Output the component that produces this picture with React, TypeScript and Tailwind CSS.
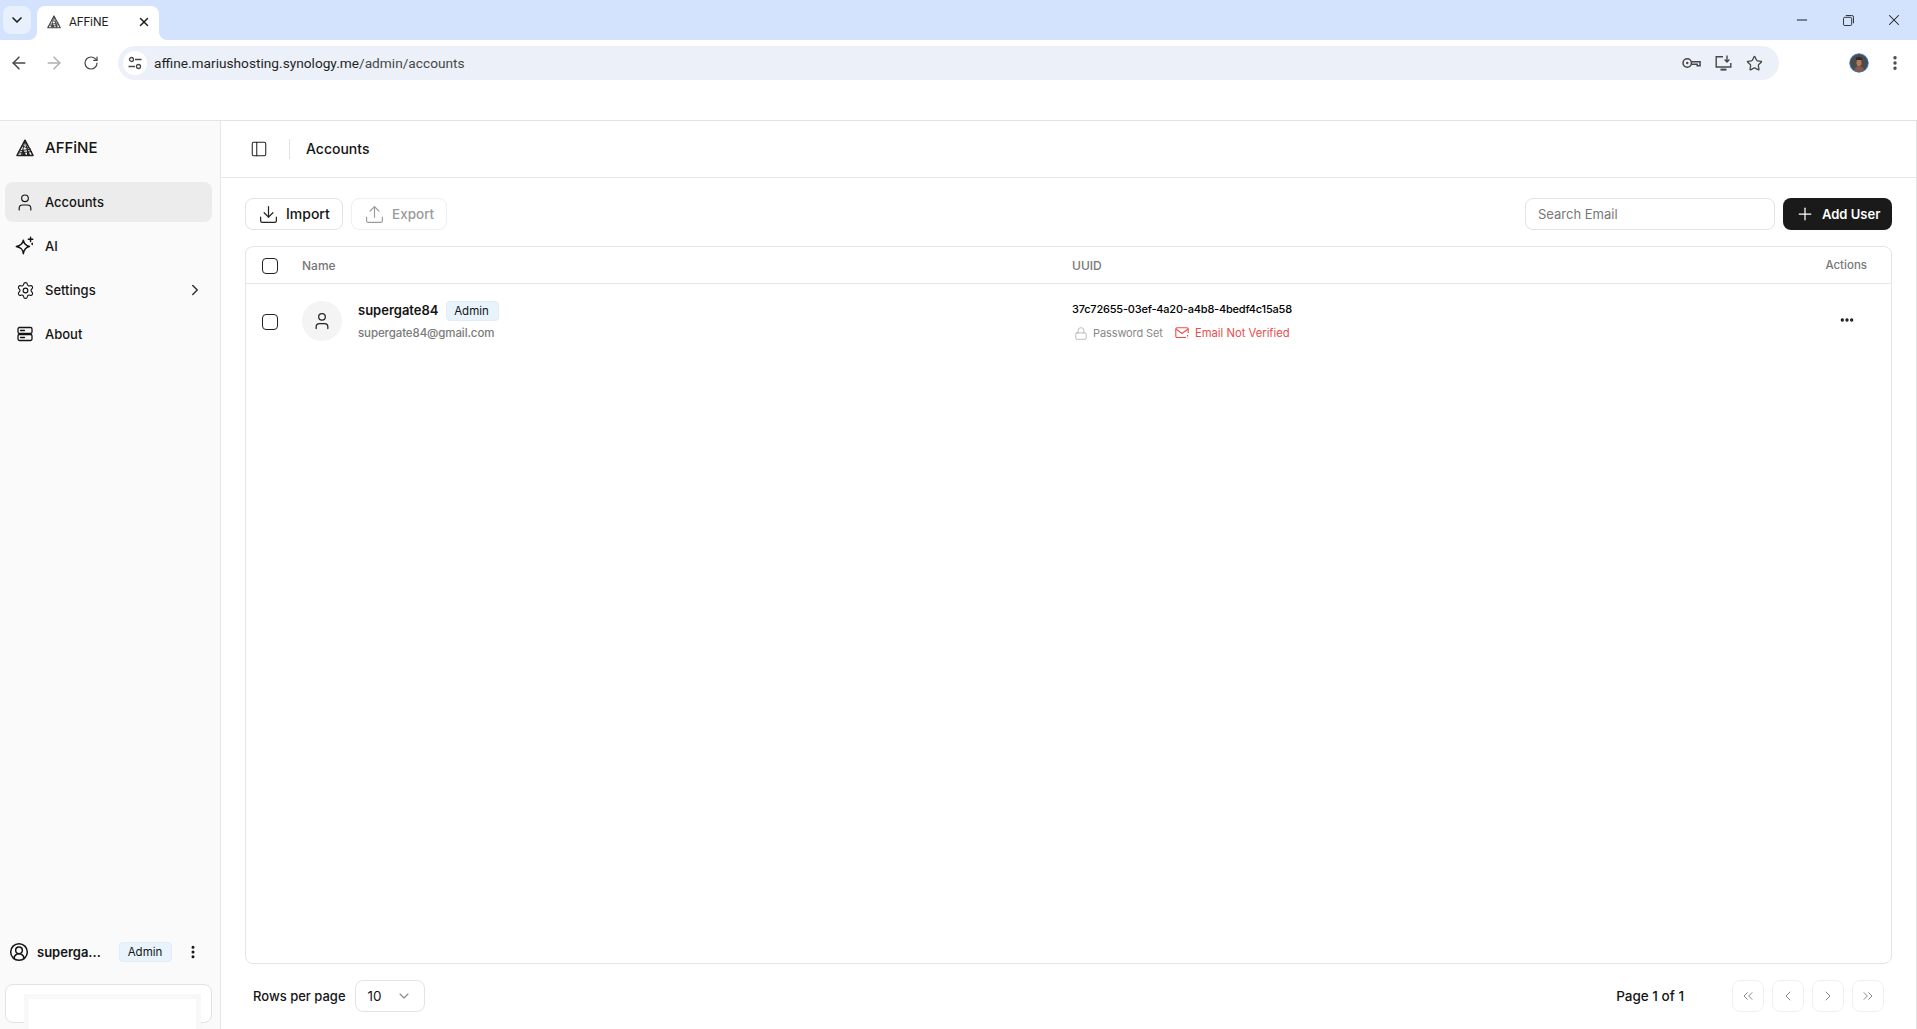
import {
  ArrowLeft, ArrowRight, RotateCw, X, Minus, Star, EllipsisVertical, User, Settings, ChevronRight,
  PanelLeft, Download, Upload, Plus, Ellipsis, ChevronDown, ChevronLeft, ChevronsLeft, ChevronsRight, Lock, CircleUserRound,
} from 'lucide-react';

function AffineLogo({ className }: { className?: string }) {
  return (
    <svg viewBox="0 0 18 18" className={className} fill="none" stroke="currentColor">
      <path d="M9 1.2 L1 16.4 H17 Z" strokeWidth="1.5" strokeLinejoin="round" />
      <path d="M9 1.5 L5.5 16 M9 1.5 L12.5 16 M3.5 12 L15 10 M3 14 L16 12.5 M6 7 L12 9" strokeWidth="1" />
      <path d="M7 10 L10 16 H6 Z M11 8 L14 16 H11 Z" fill="currentColor" stroke="none" />
    </svg>
  );
}

function AiIcon({ className }: { className?: string }) {
  return (
    <svg viewBox="0 0 18 18" className={className} fill="none" stroke="currentColor" strokeWidth="1.3" strokeLinejoin="round" strokeLinecap="round">
      <path d="M7.5 3.8 C8 7 9.4 8.6 13 9.5 C9.4 10.4 8 12 7.5 16 C7 12 5.6 10.4 1.2 9.5 C5.6 8.6 7 7 7.5 3.8 Z" />
      <path d="M14 1 v4 M12 3 h4" />
      <path d="M15.5 6.6 v1" />
    </svg>
  );
}

function AboutIcon({ className }: { className?: string }) {
  return (
    <svg viewBox="0 0 16 16" className={className} fill="none" stroke="currentColor" strokeWidth="1.3" strokeLinecap="round">
      <rect x="1" y="1.5" width="14" height="6" rx="1.4" />
      <rect x="1" y="8.5" width="14" height="6" rx="1.4" />
      <path d="M3.5 4.5 h4 M3.5 11.5 h4" />
    </svg>
  );
}

function TuneIcon() {
  return (
    <svg viewBox="0 0 14 14" className="h-[14px] w-[14px]" fill="none" stroke="#474747" strokeWidth="1.3">
      <circle cx="3.5" cy="3.5" r="2" />
      <path d="M7 3.5 h6.5 M.5 10.5 h6.5" />
      <circle cx="10.5" cy="10.5" r="2" />
    </svg>
  );
}

function KeyIcon() {
  return (
    <svg viewBox="0 0 20 12" className="h-[12px] w-[19px]" fill="none" stroke="#474747" strokeWidth="1.6">
      <circle cx="5.5" cy="6" r="4.4" />
      <circle cx="5.5" cy="6" r="1.3" fill="#474747" stroke="none" />
      <path d="M10 4.6 h9 v4.4 h-3 v-1.8 h-6" />
    </svg>
  );
}

function InstallIcon() {
  return (
    <svg viewBox="0 0 17 16" className="h-[16px] w-[17px]" fill="none" stroke="#474747" strokeWidth="1.4">
      <path d="M8 1.7 H1.2 V12 H15.8 V8" />
      <path d="M5.5 14.6 H11.5" strokeWidth="2" />
      <path d="M12 .5 V7 M9.6 4.6 L12 7 L14.4 4.6" />
    </svg>
  );
}

function ProfileAvatar() {
  return (
    <svg viewBox="0 0 20 20" className="h-5 w-5 rounded-full">
      <circle cx="10" cy="10" r="10" fill="#4a9be8" />
      <circle cx="10" cy="10" r="9" fill="#4b4b4b" />
      <path d="M7 5 C8 3.5 12 3.5 13 5.5 V9 H7 Z" fill="#3a2620" />
      <path d="M7.5 7 H12.5 V11.5 L10.5 13 H8.5 L7.5 11 Z" fill="#b07a62" />
      <path d="M5.5 17 C6 14 8 13 10 13 C12.5 13 14.5 14.5 15 17.5 L10 19 Z" fill="#8a5a48" />
    </svg>
  );
}

function MailAlertIcon() {
  return (
    <svg viewBox="0 0 14 12" className="h-[12px] w-[14px]" fill="none" stroke="#eb4d4d" strokeWidth="1.1" strokeLinejoin="round">
      <path d="M11 10.5 H2 a1.2 1.2 0 0 1 -1.2 -1.2 V2 A1.2 1.2 0 0 1 2 .8 H12 A1.2 1.2 0 0 1 13.2 2 V6" />
      <path d="M1 2 L7 6.5 L13 2" />
      <path d="M12.6 8 v1.6 M12.6 10.8 v.5" />
    </svg>
  );
}

function NavItem({ icon, label, active, chevron }: { icon: React.ReactNode; label: string; active?: boolean; chevron?: boolean }) {
  return (
    <div className={`flex h-10 items-center rounded-lg pl-[10px] pr-2 ${active ? 'bg-[#ececec]' : ''}`}>
      <span className="mr-[10px] flex w-5 shrink-0 items-center justify-center">{icon}</span>
      <span className="pt-px text-[13px] font-medium text-[#141414]">{label}</span>
      {chevron && <ChevronRight className="ml-auto h-[18px] w-[18px] text-[#333]" strokeWidth={2} />}
    </div>
  );
}

function PageButton({ children }: { children: React.ReactNode }) {
  return (
    <div className="flex h-8 w-8 items-center justify-center rounded-lg border border-[#f0f0f0] text-[#8a8a8a]">
      {children}
    </div>
  );
}

function AdminBadge() {
  return (
    <span className="flex h-5 w-[53px] items-center justify-center rounded border border-[#e0edf7] bg-[#e8f3fc] pr-px pt-px text-[11.5px] text-[#141414]">
      Admin
    </span>
  );
}

function Checkbox() {
  return <span className="h-4 w-4 shrink-0 rounded border border-[#222]" />;
}

export default function App() {
  return (
    <div className="flex h-[1029px] w-[1917px] flex-col overflow-hidden bg-white font-['Inter',sans-serif] text-[#141414]">
      {/* browser frame */}
      <div className="flex h-10 shrink-0 items-end bg-[#d3e3fd] pl-[3px]">
        <div className="mb-[6px] flex h-[28px] w-[28px] items-center justify-center rounded-lg bg-[#e9f0fd]">
          <ChevronDown className="h-4 w-4 text-[#1f1f1f]" strokeWidth={2.5} />
        </div>
        <div className="relative ml-[6px] flex h-[34px] w-[122px] items-center rounded-t-lg bg-white pb-[3px] pl-[10px] pr-[8px]">
          <svg viewBox="0 0 8 8" className="absolute -left-2 bottom-0 h-2 w-2"><path d="M8 0 V8 H0 A8 8 0 0 0 8 0 Z" fill="#fff" /></svg>
          <svg viewBox="0 0 8 8" className="absolute -right-2 bottom-0 h-2 w-2"><path d="M0 0 V8 H8 A8 8 0 0 1 0 0 Z" fill="#fff" /></svg>
          <AffineLogo className="h-[14px] w-[14px] text-[#444]" />
          <span className="ml-[8px] font-['Roboto',sans-serif] text-xs text-[#1f1f1f]">AFFiNE</span>
          <X className="ml-auto h-[14px] w-[14px] text-[#1f1f1f]" strokeWidth={2.5} />
        </div>
        <div className="ml-auto flex h-10 items-center text-[#1f1f1f]">
          <span className="flex w-[46px] justify-center"><Minus className="h-4 w-4" strokeWidth={1.5} /></span>
          <span className="flex w-[46px] justify-center">
            <svg viewBox="0 0 12 12" className="h-[11px] w-[11px]" fill="none" stroke="currentColor" strokeWidth="1"><rect x=".5" y="2.5" width="9" height="9" rx="1.5" /><path d="M3 .5 H9.5 A2 2 0 0 1 11.5 2.5 V9" /></svg>
          </span>
          <span className="flex w-[46px] justify-center"><X className="h-[18px] w-[18px]" strokeWidth={1.4} /></span>
        </div>
      </div>
      <div className="flex h-10 shrink-0 items-center rounded-tr-lg bg-white">
        <div className="mt-[6px] flex w-[118px] shrink-0 items-center text-[#474747]">
          <ArrowLeft className="ml-[9px] h-5 w-5" strokeWidth={1.8} />
          <ArrowRight className="ml-[15px] h-5 w-5 text-[#b0b0b0]" strokeWidth={1.8} />
          <RotateCw className="ml-[19px] h-4 w-4" strokeWidth={1.8} />
        </div>
        <div className="mt-[6px] flex h-[34px] w-[1661px] items-center rounded-full bg-[#ecf1f9] pl-[5px] pr-[16px]">
          <span className="flex h-6 w-6 items-center justify-center rounded-full bg-white"><TuneIcon /></span>
          <span className="ml-[7px] font-['Roboto',sans-serif] text-[13.7px] text-[#1f1f1f]">
            affine.mariushosting.synology.me<span className="text-[#474747]">/admin/accounts</span>
          </span>
          <span className="ml-auto flex items-center gap-[14px]">
            <KeyIcon />
            <InstallIcon />
            <Star className="h-[17px] w-[17px] text-[#474747]" strokeWidth={1.8} />
          </span>
        </div>
        <span className="ml-[70px] mt-[6px]"><ProfileAvatar /></span>
        <EllipsisVertical className="ml-[17px] mt-[6px] h-[18px] w-[18px] text-[#474747]" strokeWidth={2.5} />
      </div>
      <div className="h-[41px] shrink-0 border-b border-[#e3e3e3] bg-white" />

      {/* page */}
      <div className="flex min-h-0 flex-1 border-r border-[#e3e3e3]">
        <aside className="flex w-[221px] shrink-0 flex-col border-r border-[#e8e8e8] bg-[#fafafa]">
          <div className="flex h-[61px] shrink-0 items-center pb-[8px] pl-4">
            <AffineLogo className="h-[18px] w-[18px] text-[#222]" />
            <span className="ml-[11px] pt-px text-[15px] font-medium text-[#141414]">AFFiNE</span>
          </div>
          <nav className="flex flex-col gap-1 pl-[5px] pr-2">
            <NavItem active label="Accounts" icon={<User className="h-[21px] w-[21px]" strokeWidth={1.4} />} />
            <NavItem label="AI" icon={<AiIcon className="h-5 w-5" />} />
            <NavItem label="Settings" chevron icon={<Settings className="h-[19px] w-[19px]" strokeWidth={1.4} />} />
            <NavItem label="About" icon={<AboutIcon className="h-4 w-4" />} />
          </nav>
          <div className="mt-auto flex h-5 shrink-0 items-center pl-[9px]">
            <CircleUserRound className="h-[20px] w-[20px] text-[#141414]" strokeWidth={1.8} />
            <span className="ml-[8px] w-[82px] pt-px text-[13px] font-semibold text-[#141414]">superga...</span>
            <AdminBadge />
            <EllipsisVertical className="ml-[13px] h-4 w-4 text-[#141414]" strokeWidth={2.5} />
          </div>
          <div className="ml-[5px] mt-[22px] mb-[6px] h-[39px] w-[207px] shrink-0 rounded-lg border border-[#e3e3e3] bg-white pl-[18px] pt-[9px]">
            <div className="h-[36px] w-[177px] bg-[#f8f8f8] px-[5px] pt-[5px]">
              <div className="h-[31px] w-[167px] bg-white" />
            </div>
          </div>
        </aside>

        <main className="flex min-w-0 flex-1 flex-col">
          <header className="flex h-[57px] shrink-0 items-center border-b border-[#e8e8e8] pl-[29px]">
            <PanelLeft className="h-[18px] w-[18px] text-[#222]" strokeWidth={1.4} />
            <span className="ml-[21px] h-5 w-px bg-[#e3e3e3]" />
            <span className="ml-[16px] text-sm font-medium text-[#141414]">Accounts</span>
          </header>

          <div className="flex min-h-0 flex-1 flex-col pb-[17px] pl-[24px] pr-[24px] pt-[20px]">
            <div className="flex h-8 shrink-0 items-center">
              <div className="flex h-8 w-[98px] items-center rounded-lg border border-[#e3e3e3] pl-[12px]">
                <Download className="h-[21px] w-[21px] text-[#222]" strokeWidth={1.4} />
                <span className="ml-[7px] text-sm font-medium">Import</span>
              </div>
              <div className="ml-2 flex h-8 w-[96px] items-center rounded-lg border border-[#efefef] pl-[12px] text-[#9a9a9a]">
                <Upload className="h-[21px] w-[21px]" strokeWidth={1.3} />
                <span className="ml-[7px] text-[13.5px] font-medium">Export</span>
              </div>
              <div className="ml-auto flex h-8 w-[250px] items-center rounded-lg border border-[#e3e3e3] pl-3 pt-[2px] text-[13px] text-[#777]">
                Search Email
              </div>
              <div className="ml-2 flex h-8 w-[109px] items-center rounded-lg bg-[#1a1a1a] pl-[12px] text-white">
                <Plus className="h-5 w-5" strokeWidth={1.5} />
                <span className="ml-[7px] pt-px text-[13px] font-semibold">Add User</span>
              </div>
            </div>

            <div className="mt-4 flex min-h-0 flex-1 flex-col rounded-lg border border-[#e6e6e6]">
              <div className="flex h-[37px] shrink-0 items-center border-b border-[#e6e6e6] pl-4 pr-6 text-xs font-medium text-[#777]">
                <span className="mt-[2px] flex"><Checkbox /></span>
                <span className="ml-6 w-[770px] pt-px">Name</span>
                <span className="pt-px">UUID</span>
                <span className="ml-auto pt-px text-[11.5px]">Actions</span>
              </div>
              <div className="flex h-[73px] shrink-0 items-center pl-4">
                <span className="mt-[3px] flex"><Checkbox /></span>
                <span className="ml-6 flex h-10 w-10 shrink-0 items-center justify-center rounded-full bg-[#f4f4f4]">
                  <User className="h-5 w-5 text-[#222]" strokeWidth={1.5} />
                </span>
                <div className="ml-4 w-[714px] shrink-0 pt-[2px]">
                  <div className="flex items-center">
                    <span className="text-[13px] font-semibold text-[#141414]">supergate84</span>
                    <span className="ml-[7px]"><AdminBadge /></span>
                  </div>
                  <div className="mt-[4px] text-[11.5px] font-medium tracking-[-0.1px] text-[#7a7a7a]">supergate84@gmail.com</div>
                </div>
                <div className="pt-[2px]">
                  <div className="text-[11px] font-medium tracking-[-0.2px] text-black">37c72655-03ef-4a20-a4b8-4bedf4c15a58</div>
                  <div className="mt-[7px] flex items-center text-[11px]">
                    <Lock className="ml-[2px] h-[15px] w-[14px] text-[#aaa]" strokeWidth={1.3} />
                    <span className="ml-[5px] tracking-[-0.1px] text-[#888]">Password Set</span>
                    <span className="ml-[12px]"><MailAlertIcon /></span>
                    <span className="ml-[6px] text-[11.25px] text-[#eb4d4d]">Email Not Verified</span>
                  </div>
                </div>
                <Ellipsis className="ml-auto mb-[2px] mr-[36px] h-4 w-4 text-[#141414]" strokeWidth={3} />
              </div>
            </div>

            <div className="mt-[16px] flex h-8 shrink-0 items-center pl-2 pr-2">
              <span className="pt-px text-[13px] font-medium text-[#141414]">Rows per page</span>
              <div className="ml-[9px] flex h-8 w-[70px] items-center justify-between rounded-lg border border-[#e3e3e3] pl-3 pr-3 text-[13.5px]">
                10
                <ChevronDown className="h-4 w-4 text-[#8a8a8a]" strokeWidth={1.7} />
              </div>
              <span className="ml-auto text-[13.5px] font-medium">Page 1 of 1</span>
              <div className="ml-[48px] flex gap-2">
                <PageButton><ChevronsLeft className="h-4 w-4" strokeWidth={1.5} /></PageButton>
                <PageButton><ChevronLeft className="h-4 w-4" strokeWidth={1.5} /></PageButton>
                <PageButton><ChevronRight className="h-4 w-4" strokeWidth={1.5} /></PageButton>
                <PageButton><ChevronsRight className="h-4 w-4" strokeWidth={1.5} /></PageButton>
              </div>
            </div>
          </div>
        </main>
      </div>
    </div>
  );
}
